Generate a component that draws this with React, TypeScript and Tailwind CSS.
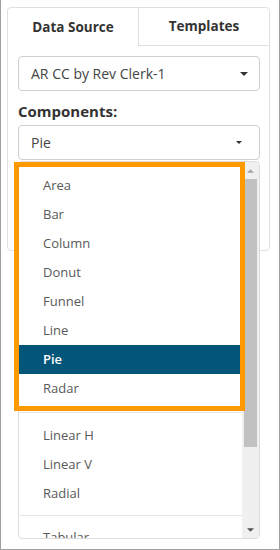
import React from 'react';

const groupA = ['Area', 'Bar', 'Column', 'Donut', 'Funnel', 'Line', 'Pie', 'Radar'];
const groupB = ['Linear H', 'Linear V', 'Radial'];

function Caret({ className }: { className: string }) {
  return (
    <svg className={className} viewBox="0 0 8 4" fill="currentColor">
      <path d="M0 0h8L4 4z" />
    </svg>
  );
}

function Item({ label, active }: { label: string; active?: boolean }) {
  return (
    <div
      className={`h-[29px] flex items-center pl-[24px] text-[13px] ${
        active ? 'bg-[#04557a] text-white font-semibold' : 'text-[#595959]'
      }`}
    >
      {label}
    </div>
  );
}

export default function App() {
  return (
    <div className="relative w-[280px] h-[550px] overflow-hidden bg-white border-x border-b border-[#a0a0a0] font-['Open_Sans',sans-serif]">
      {/* Card with tabs */}
      <div className="ml-[6px] mt-[7px] w-[263px] h-[244px] border border-[#e0e0e0] rounded-[4px]">
        <div className="flex h-[38px]">
          <div className="w-[131px] border-r border-[#e0e0e0] flex items-center justify-center text-[13.5px] font-bold text-[#333]">
            Data Source
          </div>
          <div className="flex-1 border-b border-[#e0e0e0] flex items-center justify-center text-[13.5px] font-bold text-[#333]">
            Templates
          </div>
        </div>
        <div className="px-[10px] pt-[10px]">
          <div className="h-[35px] w-[242px] border border-[#d0d0d0] rounded-[4px] flex items-center justify-between pl-[12px] pr-[11px] text-[14px] text-[#444]">
            <span>AR CC by Rev Clerk-1</span>
            <Caret className="w-[8px] h-[4px] text-[#333]" />
          </div>
          <div className="mt-[10px] h-[20px] text-[15px] font-bold text-[#333] leading-[20px]">Components:</div>
          <div className="mt-[4px] h-[35px] w-[242px] border border-[#d0d0d0] rounded-[4px] flex items-center justify-between pl-[12px] pr-[17px] text-[14px] text-[#444]">
            <span>Pie</span>
            <Caret className="w-[6px] h-[3px] text-[#333]" />
          </div>
        </div>
      </div>

      {/* Open dropdown list */}
      <div className="absolute left-[17px] top-[161px] w-[242px] h-[378px] bg-white border border-[#dcdcdc] rounded-[4px] overflow-hidden flex">
        <div className="flex-1 pt-[9px]">
          {groupA.map((l) => (
            <Item key={l} label={l} active={l === 'Pie'} />
          ))}
          <div className="mt-[9px] mb-[8px] h-px bg-[#e6e6e6]" />
          {groupB.map((l) => (
            <Item key={l} label={l} />
          ))}
          <div className="mt-[7px] mb-[7px] h-px bg-[#e6e6e6]" />
          <Item label="Tabular" />
        </div>
        <div className="w-[17px] bg-[#f0f0f0] flex flex-col items-center">
          <div className="h-[17px] flex items-center justify-center">
            <Caret className="w-[7px] h-[4px] rotate-180 text-[#a3a3a3]" />
          </div>
          <div className="w-[13px] h-[268px] bg-[#c1c1c1]" />
          <div className="flex-1" />
          <div className="h-[17px] flex items-center justify-center">
            <Caret className="w-[7px] h-[4px] text-[#505050]" />
          </div>
        </div>
      </div>

      {/* Highlight frame */}
      <div className="absolute left-[13px] top-[162px] w-[231px] h-[249px] border-[5px] border-[#ff9900] pointer-events-none" />
    </div>
  );
}
